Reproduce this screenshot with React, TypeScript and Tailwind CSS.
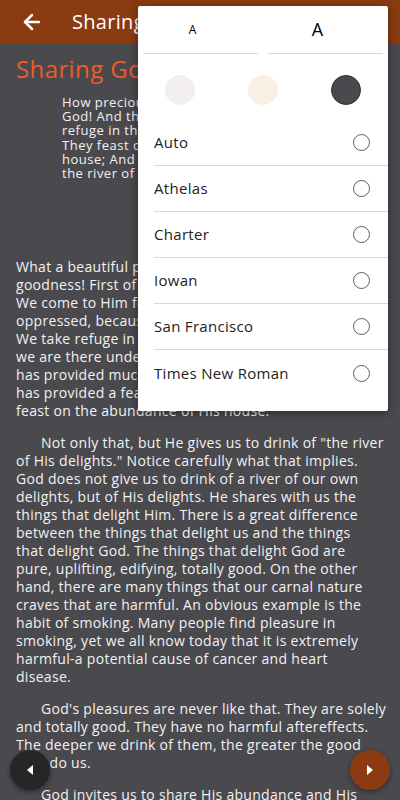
import React, { useState } from "react";
import { ArrowLeft } from "lucide-react";

const quote = [
  "How precious is Your lovingkindness, O",
  "God! And the children of men take",
  "refuge in the shadow of Your wings.",
  "They feast on the abundance of Your",
  "house; And You give them drink from",
  "the river of Your pleasures.",
];

const paragraphs: string[][] = [
  [
    "What a beautiful picture of God's",
    "goodness! First of all, He is our refuge.",
    "We come to Him for shelter when we are",
    "oppressed, because He is our protector.",
    "We take refuge in the shadow of His wings;",
    "we are there under His care. Moreover, He",
    "has provided much more than shelter. He",
    "has provided a feast for us. We are told to",
    "feast on the abundance of His house.",
  ],
  [
    "Not only that, but He gives us to drink of \"the river",
    "of His delights.\" Notice carefully what that implies.",
    "God does not give us to drink of a river of our own",
    "delights, but of His delights. He shares with us the",
    "things that delight Him. There is a great difference",
    "between the things that delight us and the things",
    "that delight God. The things that delight God are",
    "pure, uplifting, edifying, totally good. On the other",
    "hand, there are many things that our carnal nature",
    "craves that are harmful. An obvious example is the",
    "habit of smoking. Many people find pleasure in",
    "smoking, yet we all know today that it is extremely",
    "harmful-a potential cause of cancer and heart",
    "disease.",
  ],
  [
    "God's pleasures are never like that. They are solely",
    "and totally good. They have no harmful aftereffects.",
    "The deeper we drink of them, the greater the good",
    "they do us.",
  ],
  [
    "God invites us to share His abundance and His",
    "pleasures. He wants us to enjoy what He enjoys.",
  ],
];

const fonts = ["Auto", "Athelas", "Charter", "Iowan", "San Francisco", "Times New Roman"];

const ReaderSettings: React.FC = () => {
  const [font, setFont] = useState<string | null>(null);

  return (
    <div className="absolute left-[138px] top-[6px] w-[250px] rounded-[2px] bg-white pb-[15px] shadow-[0_2px_8px_rgba(0,0,0,0.45)]">
      <div className="flex px-[5px]">
        <button className="flex h-[48px] flex-1 items-center justify-center border-b border-[#d8d8d8] pr-[16px] text-[12px] text-black">
          A
        </button>
        <div className="w-[10px]" />
        <button className="flex h-[48px] flex-1 items-center justify-center border-b border-[#d8d8d8] pr-[16px] text-[18px] text-black">
          A
        </button>
      </div>
      <div className="grid grid-cols-3 pt-[21px] pb-[15px]">
        <div className="flex justify-center">
          <span className="h-[30px] w-[30px] rounded-full bg-[#f3efee]" />
        </div>
        <div className="flex justify-center">
          <span className="h-[30px] w-[30px] rounded-full bg-[#f9efe2]" />
        </div>
        <div className="flex justify-center">
          <span className="h-[30px] w-[30px] rounded-full border border-[#2f2f33] bg-[#4a494e]" />
        </div>
      </div>
      <ul>
        {fonts.map((f, i) => (
          <li
            key={f}
            onClick={() => setFont(f)}
            className={`ml-4 flex h-[46px] items-center justify-between pr-[18px] ${
              i < fonts.length - 1 ? "border-b border-[#d8d8d8]" : ""
            }`}
          >
            <span className="text-[15px] tracking-[0.3px] text-[#222]">{f}</span>
            <span className="flex h-[17px] w-[17px] items-center justify-center rounded-full border-[1.5px] border-[#5c5c5c]">
              {font === f && <span className="h-[8px] w-[8px] rounded-full bg-[#5c5c5c]" />}
            </span>
          </li>
        ))}
      </ul>
    </div>
  );
};

export default function App() {
  return (
    <div className="relative h-[800px] w-[400px] overflow-hidden bg-[#4a494e] font-['Open_Sans',sans-serif]">
      <header className="flex h-[44px] items-center bg-[#8a3b12] text-white">
        <button className="ml-[20px] mr-[28px] flex items-center" aria-label="Back">
          <ArrowLeft size={24} strokeWidth={2.5} />
        </button>
        <h1 className="truncate text-[20px] tracking-[0.3px]">Sharing God's Abundance</h1>
      </header>

      <main className="px-4 text-[#f2f2f2]">
        <h2 className="mt-[10px] text-[24px] leading-[30px] tracking-[0.4px] text-[#f05a28]">
          Sharing God's Abundance
        </h2>

        <div className="ml-[46px] mt-[11px] text-[13px] leading-[14.2px] tracking-[0.5px]">
          {quote.map((l) => (
            <div key={l}>{l}</div>
          ))}
        </div>

        <div className="mt-[78px] text-[14px] leading-[18px] tracking-[0.3px]">
          {paragraphs.map((p, pi) => (
            <p key={pi} className="mb-[14px]">
              {p.map((l, li) => (
                <span key={li} className={`block whitespace-nowrap ${li === 0 && pi > 0 ? "pl-[25px]" : ""}`}>
                  {l}
                </span>
              ))}
            </p>
          ))}
        </div>
      </main>

      <ReaderSettings />

      <button
        aria-label="Previous page"
        className="absolute bottom-[10px] left-[10px] flex h-[40px] w-[40px] items-center justify-center rounded-full bg-[#262626] shadow-[0_2px_5px_rgba(0,0,0,0.4)]"
      >
        <span className="h-0 w-0 border-y-[5px] border-r-[6px] border-y-transparent border-r-white" />
      </button>
      <button
        aria-label="Next page"
        className="absolute bottom-[10px] right-[10px] flex h-[40px] w-[40px] items-center justify-center rounded-full bg-[#8a3b12] shadow-[0_2px_5px_rgba(0,0,0,0.4)]"
      >
        <span className="h-0 w-0 border-y-[5px] border-l-[6px] border-y-transparent border-l-white" />
      </button>
    </div>
  );
}
